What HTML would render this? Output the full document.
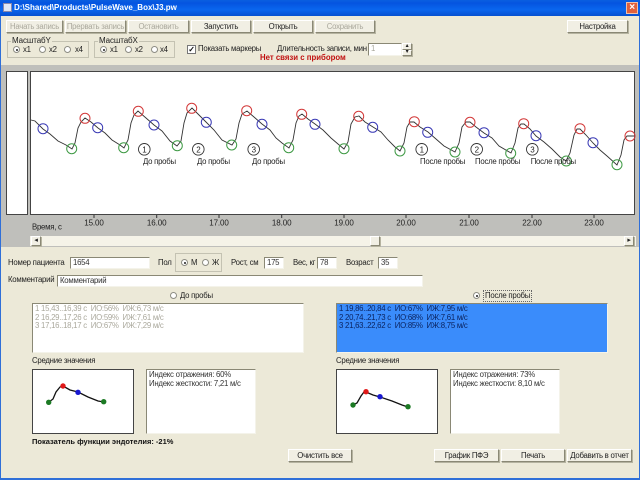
<!DOCTYPE html>
<html><head><meta charset="utf-8"><style>
html,body{margin:0;padding:0}
body{width:640px;height:480px;overflow:hidden;position:relative;background:#ece9d8;font-family:"Liberation Sans",sans-serif;font-size:7.8px;letter-spacing:-.25px;color:#222}
#a{position:absolute;left:0;top:0;width:640px;height:480px;filter:blur(.3px)}
.t{position:absolute;white-space:nowrap;line-height:10px}
.b{position:absolute;box-sizing:border-box;height:13px;background:#f1efe4;border:1px solid;border-color:#fff #8a8875 #8a8875 #fff;box-shadow:1px 1px 0 #b5b3a0;text-align:center;line-height:11px;font-size:7.8px;color:#222;white-space:nowrap}
.d{color:#aaa89c}
.i{position:absolute;box-sizing:border-box;background:#fff;border:1px solid;border-color:#8a8875 #f4f3ea #f4f3ea #8a8875;line-height:10px;padding-left:2px;font-size:7.8px;color:#333;white-space:nowrap}
.l{line-height:8.6px;padding-top:1px}
.g{position:absolute;box-sizing:border-box;border:1px solid #c4c2b2}
.r{position:absolute;width:7px;height:7px;border-radius:50%;box-sizing:border-box;background:#fff;border:1px solid #8d8d84}
.r.on::after{content:"";position:absolute;left:1.5px;top:1.5px;width:2px;height:2px;border-radius:50%;background:#222}
.w{position:absolute;box-sizing:border-box;background:#fff}
</style></head><body><div id="a">
<div style="position:absolute;left:0;top:0;width:640px;height:16px;background:linear-gradient(#0a5fe0,#0554e0 20%,#0a66ee 60%,#0650d0)"></div>
<div style="position:absolute;left:3px;top:3px;width:9px;height:9px;background:#dfe6f5;border:1px solid #88a;box-sizing:border-box"></div>
<div class="t" style="left:14px;top:3px;color:#fff;font-weight:bold;font-size:8px;letter-spacing:0">D:\Shared\Products\PulseWave_Box\J3.pw</div>
<div style="position:absolute;left:626px;top:2px;width:12px;height:12px;background:#e0603c;border:1px solid #f0c0a8;box-sizing:border-box;color:#fff;font-size:10px;font-weight:bold;line-height:10px;text-align:center">×</div>

<div class="b d" style="left:6px;top:20px;width:57px">Начать запись</div>
<div class="b d" style="left:65px;top:20px;width:61px">Прервать запись</div>
<div class="b d" style="left:128px;top:20px;width:61px">Остановить</div>
<div class="b" style="left:191px;top:20px;width:60px">Запустить</div>
<div class="b" style="left:253px;top:20px;width:60px">Открыть</div>
<div class="b d" style="left:315px;top:20px;width:60px">Сохранить</div>
<div class="b" style="left:567px;top:20px;width:61px">Настройка</div>

<div class="g" style="left:7px;top:41px;width:82px;height:17px"></div>
<div class="t" style="left:11px;top:36px;background:#ece9d8;padding:0 1px;font-size:8px;letter-spacing:-.1px">МасштабY</div>
<div class="r on" style="left:13px;top:46px"></div><div class="t" style="left:23px;top:45px">x1</div>
<div class="r" style="left:39px;top:46px"></div><div class="t" style="left:49px;top:45px">x2</div>
<div class="r" style="left:64px;top:46px"></div><div class="t" style="left:75px;top:45px">x4</div>
<div class="g" style="left:94px;top:41px;width:81px;height:17px"></div>
<div class="t" style="left:98px;top:36px;background:#ece9d8;padding:0 1px;font-size:8px;letter-spacing:-.1px">МасштабX</div>
<div class="r on" style="left:100px;top:46px"></div><div class="t" style="left:110px;top:45px">x1</div>
<div class="r" style="left:125px;top:46px"></div><div class="t" style="left:135px;top:45px">x2</div>
<div class="r" style="left:151px;top:46px"></div><div class="t" style="left:160px;top:45px">x4</div>

<div style="position:absolute;left:187px;top:45px;width:7px;height:7px;background:#fff;border:1px solid #777;color:#111;font-size:8px;line-height:7px;text-align:center;font-weight:bold">✓</div>
<div class="t" style="left:198px;top:44px">Показать маркеры</div>
<div class="t" style="left:277px;top:44px">Длительность записи, мин</div>
<div class="i" style="left:368px;top:43px;width:34px;height:13px;color:#aaa89c">1</div>
<div class="b" style="left:402px;top:43px;width:10px;height:7px;line-height:4px;font-size:6px">▴</div>
<div class="b" style="left:402px;top:50px;width:10px;height:6px;line-height:3px;font-size:6px">▾</div>
<div class="t" style="left:260px;top:53px;color:#c01010;font-weight:bold;font-size:7.8px;letter-spacing:0">Нет связи с прибором</div>

<div style="position:absolute;left:0;top:65px;width:640px;height:182px;background:#bfbfbb"></div>
<div class="w" style="left:6px;top:71px;width:22px;height:144px;border:1px solid #444"></div>
<div class="w" style="left:30px;top:71px;width:605px;height:144px;border:1px solid #444"></div>

<svg style="position:absolute;left:0;top:65px" width="640" height="170" viewBox="0 65 640 170" fill="none" font-family="Liberation Sans" font-size="7.8">
<path d="M31 120L35 121L43 129L50 134L58 141L66 145L72 149L75 143L78 128L81 122L85 118L91 122L98 128L105 133L112 140L120 145L124 148L128 140L131 123L134 115L138 111L146 118L154 125L162 131L170 141L177 146L181 141L184 123L187 113L192 108L198 114L206 122L214 130L222 140L232 145L236 139L239 123L242 114L247 111L254 117L262 124L270 130L276 138L282 143L289 148L293 140L296 123L299 116L302 114L308 119L315 124L323 130L331 138L338 144L344 149L348 142L351 124L355 117L359 116L365 122L373 127L381 132L388 140L395 147L400 151L404 143L407 127L410 122L414 122L420 127L428 132L436 139L444 146L455 152L459 143L462 127L466 122L470 122L476 127L484 133L492 138L499 146L511 153L515 143L518 128L521 124L524 124L530 129L536 136L544 142L552 149L560 157L566 161L570 153L574 135L577 129L580 129L586 135L593 143L600 150L607 156L617 165L621 155L624 140L627 136L634 136" stroke="#333" stroke-width=".9"/>
<g stroke="#3f9a45"><circle cx="71.7" cy="148.7" r="5"/><circle cx="123.7" cy="147.7" r="5"/><circle cx="177.3" cy="145.7" r="5"/><circle cx="231.7" cy="145" r="5"/><circle cx="288.7" cy="147.7" r="5"/><circle cx="344" cy="148.7" r="5"/><circle cx="400" cy="151" r="5"/><circle cx="455" cy="152" r="5"/><circle cx="510.7" cy="153.3" r="5"/><circle cx="566.3" cy="161" r="5"/><circle cx="617" cy="164.7" r="5"/></g>
<g stroke="#d33a3a"><circle cx="85" cy="118.3" r="5"/><circle cx="138.3" cy="111.3" r="5"/><circle cx="191.7" cy="108.3" r="5"/><circle cx="246.7" cy="110.7" r="5"/><circle cx="301.7" cy="114.3" r="5"/><circle cx="358.7" cy="116.3" r="5"/><circle cx="414.3" cy="121.7" r="5"/><circle cx="470" cy="122.3" r="5"/><circle cx="523.7" cy="123.7" r="5"/><circle cx="580" cy="128.7" r="5"/><circle cx="630" cy="136" r="5"/></g>
<g stroke="#3b3bb5"><circle cx="43" cy="128.7" r="5"/><circle cx="97.7" cy="127.7" r="5"/><circle cx="154" cy="125" r="5"/><circle cx="206.3" cy="122.3" r="5"/><circle cx="262" cy="124.3" r="5"/><circle cx="315" cy="124.3" r="5"/><circle cx="372.7" cy="127.3" r="5"/><circle cx="427.7" cy="132.3" r="5"/><circle cx="484" cy="132.7" r="5"/><circle cx="536" cy="135.7" r="5"/><circle cx="593" cy="142.7" r="5"/></g>
<g stroke="#333" stroke-width=".9"><circle cx="144.3" cy="149.3" r="5.8"/><circle cx="198.3" cy="149.3" r="5.8"/><circle cx="253.7" cy="149.3" r="5.8"/><circle cx="421.7" cy="149.3" r="5.8"/><circle cx="476.7" cy="149.3" r="5.8"/><circle cx="532.3" cy="149.3" r="5.8"/></g>
<g fill="#222" text-anchor="middle" font-size="8"><text x="144.3" y="152.3">1</text><text x="198.3" y="152.3">2</text><text x="253.7" y="152.3">3</text><text x="421.7" y="152.3">1</text><text x="476.7" y="152.3">2</text><text x="532.3" y="152.3">3</text></g>
<g fill="#222"><text x="143" y="164">До пробы</text><text x="197" y="164">До пробы</text><text x="252" y="164">До пробы</text><text x="420" y="164">После пробы</text><text x="475" y="164">После пробы</text><text x="530.7" y="164">После пробы</text></g>
<g stroke="#333"><path d="M94 215v3M156.7 215v3M219 215v3M281.7 215v3M344 215v3M406 215v3M469 215v3M532 215v3M594 215v3"/></g>
<g fill="#222" text-anchor="middle" font-size="8" letter-spacing="-.1"><text x="94" y="225.5">15.00</text><text x="156.7" y="225.5">16.00</text><text x="219" y="225.5">17.00</text><text x="281.7" y="225.5">18.00</text><text x="344" y="225.5">19.00</text><text x="406" y="225.5">20.00</text><text x="469" y="225.5">21.00</text><text x="532" y="225.5">22.00</text><text x="594" y="225.5">23.00</text></g>
<text x="32" y="229.5" fill="#222">Время, с</text>
</svg>

<div style="position:absolute;left:30px;top:236px;width:606px;height:10px;background:#f5f3e8"></div>
<div class="b" style="left:31px;top:236px;width:10px;height:10px;line-height:7px;font-size:7px">◂</div>
<div class="b" style="left:370px;top:236px;width:10px;height:10px"></div>
<div class="b" style="left:624px;top:236px;width:10px;height:10px;line-height:7px;font-size:7px">▸</div>

<div class="t" style="left:8px;top:258px">Номер пациента</div>
<div class="i" style="left:70px;top:257px;width:80px;height:12px">1654</div>
<div class="t" style="left:158px;top:258px">Пол</div>
<div class="g" style="left:175px;top:253px;width:47px;height:19px"></div>
<div class="r on" style="left:181px;top:259px"></div><div class="t" style="left:191px;top:258px">М</div>
<div class="r" style="left:202px;top:259px"></div><div class="t" style="left:212px;top:258px">Ж</div>
<div class="t" style="left:231px;top:258px">Рост, см</div>
<div class="i" style="left:264px;top:257px;width:20px;height:12px">175</div>
<div class="t" style="left:293px;top:258px">Вес, кг</div>
<div class="i" style="left:317px;top:257px;width:20px;height:12px">78</div>
<div class="t" style="left:346px;top:258px">Возраст</div>
<div class="i" style="left:378px;top:257px;width:20px;height:12px">35</div>
<div class="t" style="left:8px;top:275px">Комментарий</div>
<div class="i" style="left:57px;top:275px;width:366px;height:12px">Комментарий</div>

<div class="r" style="left:170px;top:292px"></div><div class="t" style="left:180px;top:291px">До пробы</div>
<div class="r on" style="left:473px;top:292px"></div><div class="t" style="left:484px;top:291px;outline:1px dotted #666;padding:0 1px">После пробы</div>

<div class="i l" style="left:32px;top:303px;width:272px;height:50px;color:#aaa89c">1 15,43..16,39 с &nbsp;ИО:56% &nbsp;ИЖ:6,73 м/с<br>2 16,29..17,26 с &nbsp;ИО:59% &nbsp;ИЖ:7,61 м/с<br>3 17,16..18,17 с &nbsp;ИО:67% &nbsp;ИЖ:7,29 м/с</div>
<div class="i l" style="left:336px;top:303px;width:272px;height:50px;background:#3a8cfb;color:#0b2460">1 19,86..20,84 с &nbsp;ИО:67% &nbsp;ИЖ:7,95 м/с<br>2 20,74..21,73 с &nbsp;ИО:68% &nbsp;ИЖ:7,61 м/с<br>3 21,63..22,62 с &nbsp;ИО:85% &nbsp;ИЖ:8,75 м/с</div>

<div class="t" style="left:32px;top:356px">Средние значения</div>
<div class="t" style="left:336px;top:356px">Средние значения</div>
<div class="w" style="left:32px;top:369px;width:102px;height:65px;border:1px solid #444"></div>
<div class="w" style="left:336px;top:369px;width:102px;height:65px;border:1px solid #444"></div>
<svg style="position:absolute;left:0;top:360px" width="640" height="80" viewBox="0 360 640 80" fill="none">
<path d="M49 402L53 399L56 392L60 387L63 386L70 390L78 392L88 397L98 401L104 402" stroke="#111" stroke-width="1.3"/>
<path d="M353 405L357 403L361 396L364 392L366 392L373 395L380 397L392 401L402 405L408 407" stroke="#111" stroke-width="1.3"/>
<g fill="#1c7a24"><circle cx="48.7" cy="402.3" r="2.7"/><circle cx="103.7" cy="401.7" r="2.7"/><circle cx="353" cy="405" r="2.7"/><circle cx="408" cy="406.7" r="2.7"/></g>
<g fill="#e01818"><circle cx="63" cy="386" r="2.7"/><circle cx="366" cy="391.7" r="2.7"/></g>
<g fill="#1818d0"><circle cx="78" cy="392.3" r="2.7"/><circle cx="380" cy="396.7" r="2.7"/></g>
</svg>
<div class="i l" style="left:146px;top:369px;width:110px;height:65px">Индекс отражения: 60%<br>Индекс жесткости: 7,21 м/с</div>
<div class="i l" style="left:450px;top:369px;width:110px;height:65px">Индекс отражения: 73%<br>Индекс жесткости: 8,10 м/с</div>
<div class="t" style="left:32px;top:437px;font-weight:bold;font-size:7.5px;letter-spacing:0;color:#111">Показатель функции эндотелия: -21%</div>

<div class="b" style="left:288px;top:449px;width:64px">Очистить все</div>
<div class="b" style="left:434px;top:449px;width:65px">График ПФЭ</div>
<div class="b" style="left:501px;top:449px;width:64px">Печать</div>
<div class="b" style="left:567px;top:449px;width:65px">Добавить в отчет</div>

<div style="position:absolute;left:0;top:478px;width:640px;height:2px;background:#2f6fd8"></div>
<div style="position:absolute;left:0;top:16px;width:1px;height:462px;background:#2f6fd8"></div>
<div style="position:absolute;left:639px;top:16px;width:1px;height:462px;background:#2f6fd8"></div>
</div></body></html>
